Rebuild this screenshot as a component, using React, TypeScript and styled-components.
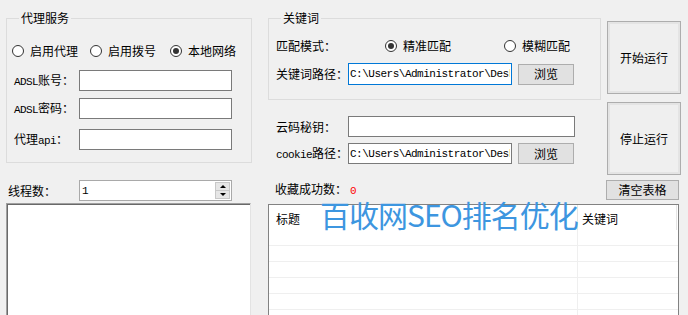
import React from "react";
import styled, { createGlobalStyle } from "styled-components";

const Global = createGlobalStyle`
  html, body { margin: 0; padding: 0; background: #f0f0f0; }
  body {
    font-family: "Noto Sans CJK SC", "Liberation Sans", sans-serif;
    font-size: 12px;
    line-height: 16px;
    color: #000;
  }
  * { box-sizing: border-box; }
`;

const MONO = `"Liberation Mono", "Noto Sans CJK SC", monospace`;

const Page = styled.div`
  width: 688px;
  height: 315px;
  overflow: hidden;
  display: flex;
  flex-direction: column;
`;

const TopSection = styled.div`
  display: flex;
  align-items: flex-start;
  height: 175px;
  padding: 10px 0 0 6px;
  flex-shrink: 0;
`;

const Group = styled.fieldset<{ $w: number; $h: number; $pl: number }>`
  margin: 0;
  padding: 0 0 0 ${(p) => p.$pl}px;
  min-width: 0;
  width: ${(p) => p.$w}px;
  height: ${(p) => p.$h}px;
  border: 1px solid #dcdcdc;
  flex-shrink: 0;
`;

const Legend = styled.legend`
  margin-left: 5px;
  padding: 0 2px;
  font-size: 12px;
  line-height: 16px;
  height: 16px;
`;

const Column = styled.div<{ $w: number; $ml?: number }>`
  display: flex;
  flex-direction: column;
  width: ${(p) => p.$w}px;
  margin-left: ${(p) => p.$ml ?? 0}px;
  flex-shrink: 0;
`;

const Row = styled.div<{ $mt: number; $h: number; $pl?: number }>`
  display: flex;
  align-items: center;
  margin-top: ${(p) => p.$mt}px;
  height: ${(p) => p.$h}px;
  padding-left: ${(p) => p.$pl ?? 0}px;
  flex-shrink: 0;
`;

const Label = styled.span<{ $w: number }>`
  width: ${(p) => p.$w}px;
  flex-shrink: 0;
  white-space: nowrap;
  font-size: 12px;
`;

const Ascii = styled.span`
  font-family: "Liberation Mono", monospace;
  font-size: 11px;
  letter-spacing: -0.6px;
`;

const RadioItem = styled.label<{ $ml?: number }>`
  display: flex;
  align-items: center;
  gap: 6px;
  margin-left: ${(p) => p.$ml ?? 0}px;
  white-space: nowrap;
`;

const RadioCircle = styled.span<{ $on?: boolean }>`
  width: 12px;
  height: 12px;
  border-radius: 50%;
  border: 1px solid #333;
  background: #fff;
  display: flex;
  align-items: center;
  justify-content: center;
  flex-shrink: 0;
  &::after {
    content: "";
    width: 6px;
    height: 6px;
    border-radius: 50%;
    background: ${(p) => (p.$on ? "#333" : "transparent")};
  }
`;

const TextBox = styled.input<{ $w: number; $h: number; $focus?: boolean }>`
  width: ${(p) => p.$w}px;
  height: ${(p) => p.$h}px;
  border: 1px solid ${(p) => (p.$focus ? "#0078d7" : "#7a7a7a")};
  background: #fff;
  padding: 0 1px;
  margin: 0;
  outline: none;
  font-family: "Liberation Mono", monospace;
  font-size: 11px;
  letter-spacing: -0.5px;
  color: #000;
  flex-shrink: 0;
`;

const Button = styled.button<{ $w: number; $h: number; $ml?: number }>`
  width: ${(p) => p.$w}px;
  height: ${(p) => p.$h}px;
  margin: 0 0 0 ${(p) => p.$ml ?? 0}px;
  padding: 0;
  border: 1px solid #adadad;
  background: #e1e1e1;
  font-family: "Noto Sans CJK SC", sans-serif;
  font-size: 12px;
  line-height: 16px;
  color: #000;
  flex-shrink: 0;
`;

const BigButton = styled.button<{ $mt: number }>`
  width: 74px;
  height: 73px;
  margin: ${(p) => p.$mt}px 0 0 0;
  padding: 0;
  border: 1px solid #adadad;
  box-shadow: inset 0 0 0 2px #e4e4e4;
  background: #efefef;
  font-family: "Noto Sans CJK SC", sans-serif;
  font-size: 12px;
  color: #000;
`;

const BottomSection = styled.div`
  display: flex;
  align-items: flex-start;
  margin-top: 5px;
  padding-left: 6px;
`;

const Spin = styled.div`
  width: 153px;
  height: 21px;
  border: 1px solid #a9a9a9;
  background: #fff;
  display: flex;
  align-items: center;
  padding: 0 1px 0 2px;
  font-family: "Liberation Mono", monospace;
  font-size: 11px;
`;

const SpinValue = styled.span`
  flex: 1;
`;

const SpinArrows = styled.div`
  width: 15px;
  height: 17px;
  display: flex;
  flex-direction: column;
  border: 1px solid #c8c8c8;
`;

const SpinHalf = styled.div<{ $down?: boolean }>`
  flex: 1;
  background: #e6e6e6;
  display: flex;
  align-items: center;
  justify-content: center;
  border-top: ${(p) => (p.$down ? "1px solid #c8c8c8" : "none")};
  &::after {
    content: "";
    border-left: 3px solid transparent;
    border-right: 3px solid transparent;
    ${(p) =>
      p.$down ? "border-top: 3px solid #000;" : "border-bottom: 3px solid #000;"}
  }
`;

const ListBox = styled.div`
  margin-top: 2px;
  width: 245px;
  height: 140px;
  background: #fff;
  border-top: 1px solid #a0a0a0;
  border-left: 1px solid #a0a0a0;
  border-right: 1px solid #e3e3e3;
  box-shadow: inset 1px 1px 0 #696969;
`;

const RightBottom = styled.div`
  position: relative;
  width: 411px;
  margin-left: 17px;
  display: flex;
  flex-direction: column;
`;

const StatusRow = styled.div`
  height: 20px;
  display: flex;
  align-items: center;
  justify-content: space-between;
  padding-left: 7px;
`;

const StatusLabel = styled.span`
  font-size: 12px;
  white-space: nowrap;
`;

const RedCount = styled.span`
  color: #ff0000;
  font-family: "Liberation Mono", monospace;
  font-size: 11px;
  margin-left: 3px;
`;

const Table = styled.div`
  margin-top: 4px;
  width: 411px;
  height: 120px;
  background: #fff;
  border: 1px solid #828282;
  border-bottom: none;
`;

const TableRow = styled.div<{ $h: number; $line?: boolean }>`
  display: grid;
  grid-template-columns: 309px 99px;
  height: ${(p) => p.$h}px;
  border-bottom: ${(p) => (p.$line ? "1px solid #efefef" : "none")};
`;

const Cell = styled.div<{ $pl: number; $div: string }>`
  padding-left: ${(p) => p.$pl}px;
  border-right: 1px solid ${(p) => p.$div};
  display: flex;
  align-items: center;
  padding-top: 2px;
  white-space: nowrap;
`;

const Watermark = styled.div`
  position: absolute;
  left: 52px;
  top: 21px;
  font-family: "Noto Sans CJK SC", sans-serif;
  font-size: 30px;
  line-height: 26px;
  letter-spacing: -1px;
  color: #3d96e0;
  white-space: nowrap;
  pointer-events: none;
`;

const PATH = "C:\\Users\\Administrator\\Desktop\\keywords.txt";
const COOKIE = "C:\\Users\\Administrator\\Desktop\\cookie.txt";

export default function App() {
  return (
    <Page>
      <Global />
      <TopSection>
        <Group $w={246} $h={153} $pl={7}>
          <Legend>代理服务</Legend>
          <Row $mt={17} $h={16} $pl={0} style={{ marginLeft: -2 }}>
            <RadioItem>
              <RadioCircle />
              启用代理
            </RadioItem>
            <RadioItem $ml={12}>
              <RadioCircle />
              启用拨号
            </RadioItem>
            <RadioItem $ml={14}>
              <RadioCircle $on />
              本地网络
            </RadioItem>
          </Row>
          <Row $mt={11} $h={21}>
            <Label $w={65}>
              <Ascii>ADSL</Ascii>账号：
            </Label>
            <TextBox $w={153} $h={21} readOnly />
          </Row>
          <Row $mt={7} $h={21}>
            <Label $w={65}>
              <Ascii>ADSL</Ascii>密码：
            </Label>
            <TextBox $w={153} $h={21} readOnly />
          </Row>
          <Row $mt={10} $h={21}>
            <Label $w={65}>
              代理<Ascii>api</Ascii>：
            </Label>
            <TextBox $w={153} $h={21} readOnly />
          </Row>
        </Group>

        <Column $w={333} $ml={16}>
          <Group $w={333} $h={90} $pl={7}>
            <Legend>关键词</Legend>
            <Row $mt={12} $h={16}>
              <Label $w={109}>匹配模式：</Label>
              <RadioItem>
                <RadioCircle $on />
                精准匹配
              </RadioItem>
              <RadioItem $ml={53}>
                <RadioCircle />
                模糊匹配
              </RadioItem>
            </Row>
            <Row $mt={9} $h={22}>
              <Label $w={72}>关键词路径：</Label>
              <TextBox $w={164} $h={22} $focus readOnly value={PATH} />
              <Button $w={56} $h={21} $ml={6}>
                浏览
              </Button>
            </Row>
          </Group>
          <Row $mt={16} $h={21} $pl={8}>
            <Label $w={72}>云码秘钥：</Label>
            <TextBox $w={227} $h={21} readOnly />
          </Row>
          <Row $mt={6} $h={21} $pl={8}>
            <Label $w={72}>
              <Ascii>cookie</Ascii>路径：
            </Label>
            <TextBox $w={164} $h={21} readOnly value={COOKIE} />
            <Button $w={56} $h={21} $ml={6}>
              浏览
            </Button>
          </Row>
        </Column>

        <Column $w={74} $ml={6}>
          <BigButton $mt={11}>开始运行</BigButton>
          <BigButton $mt={8}>停止运行</BigButton>
        </Column>
      </TopSection>

      <BottomSection>
        <Column $w={245}>
          <Row $mt={0} $h={21} $pl={2}>
            <Label $w={71}>线程数：</Label>
            <Spin>
              <SpinValue>1</SpinValue>
              <SpinArrows>
                <SpinHalf />
                <SpinHalf $down />
              </SpinArrows>
            </Spin>
          </Row>
          <ListBox />
        </Column>

        <RightBottom>
          <StatusRow>
            <StatusLabel>
              收藏成功数：<RedCount>0</RedCount>
            </StatusLabel>
            <Button $w={73} $h={20}>
              清空表格
            </Button>
          </StatusRow>
          <Table>
            <TableRow $h={25}>
              <Cell $pl={7} $div="#e5e5e5">标题</Cell>
              <Cell $pl={4} $div="#e5e5e5">关键词</Cell>
            </TableRow>
            {[0, 1, 2, 3, 4, 5].map((i) => (
              <TableRow key={i} $h={16} $line>
                <Cell $pl={7} $div="#efefef" />
                <Cell $pl={4} $div="#ffffff" />
              </TableRow>
            ))}
          </Table>
          <Watermark>百收网SEO排名优化</Watermark>
        </RightBottom>
      </BottomSection>
    </Page>
  );
}
